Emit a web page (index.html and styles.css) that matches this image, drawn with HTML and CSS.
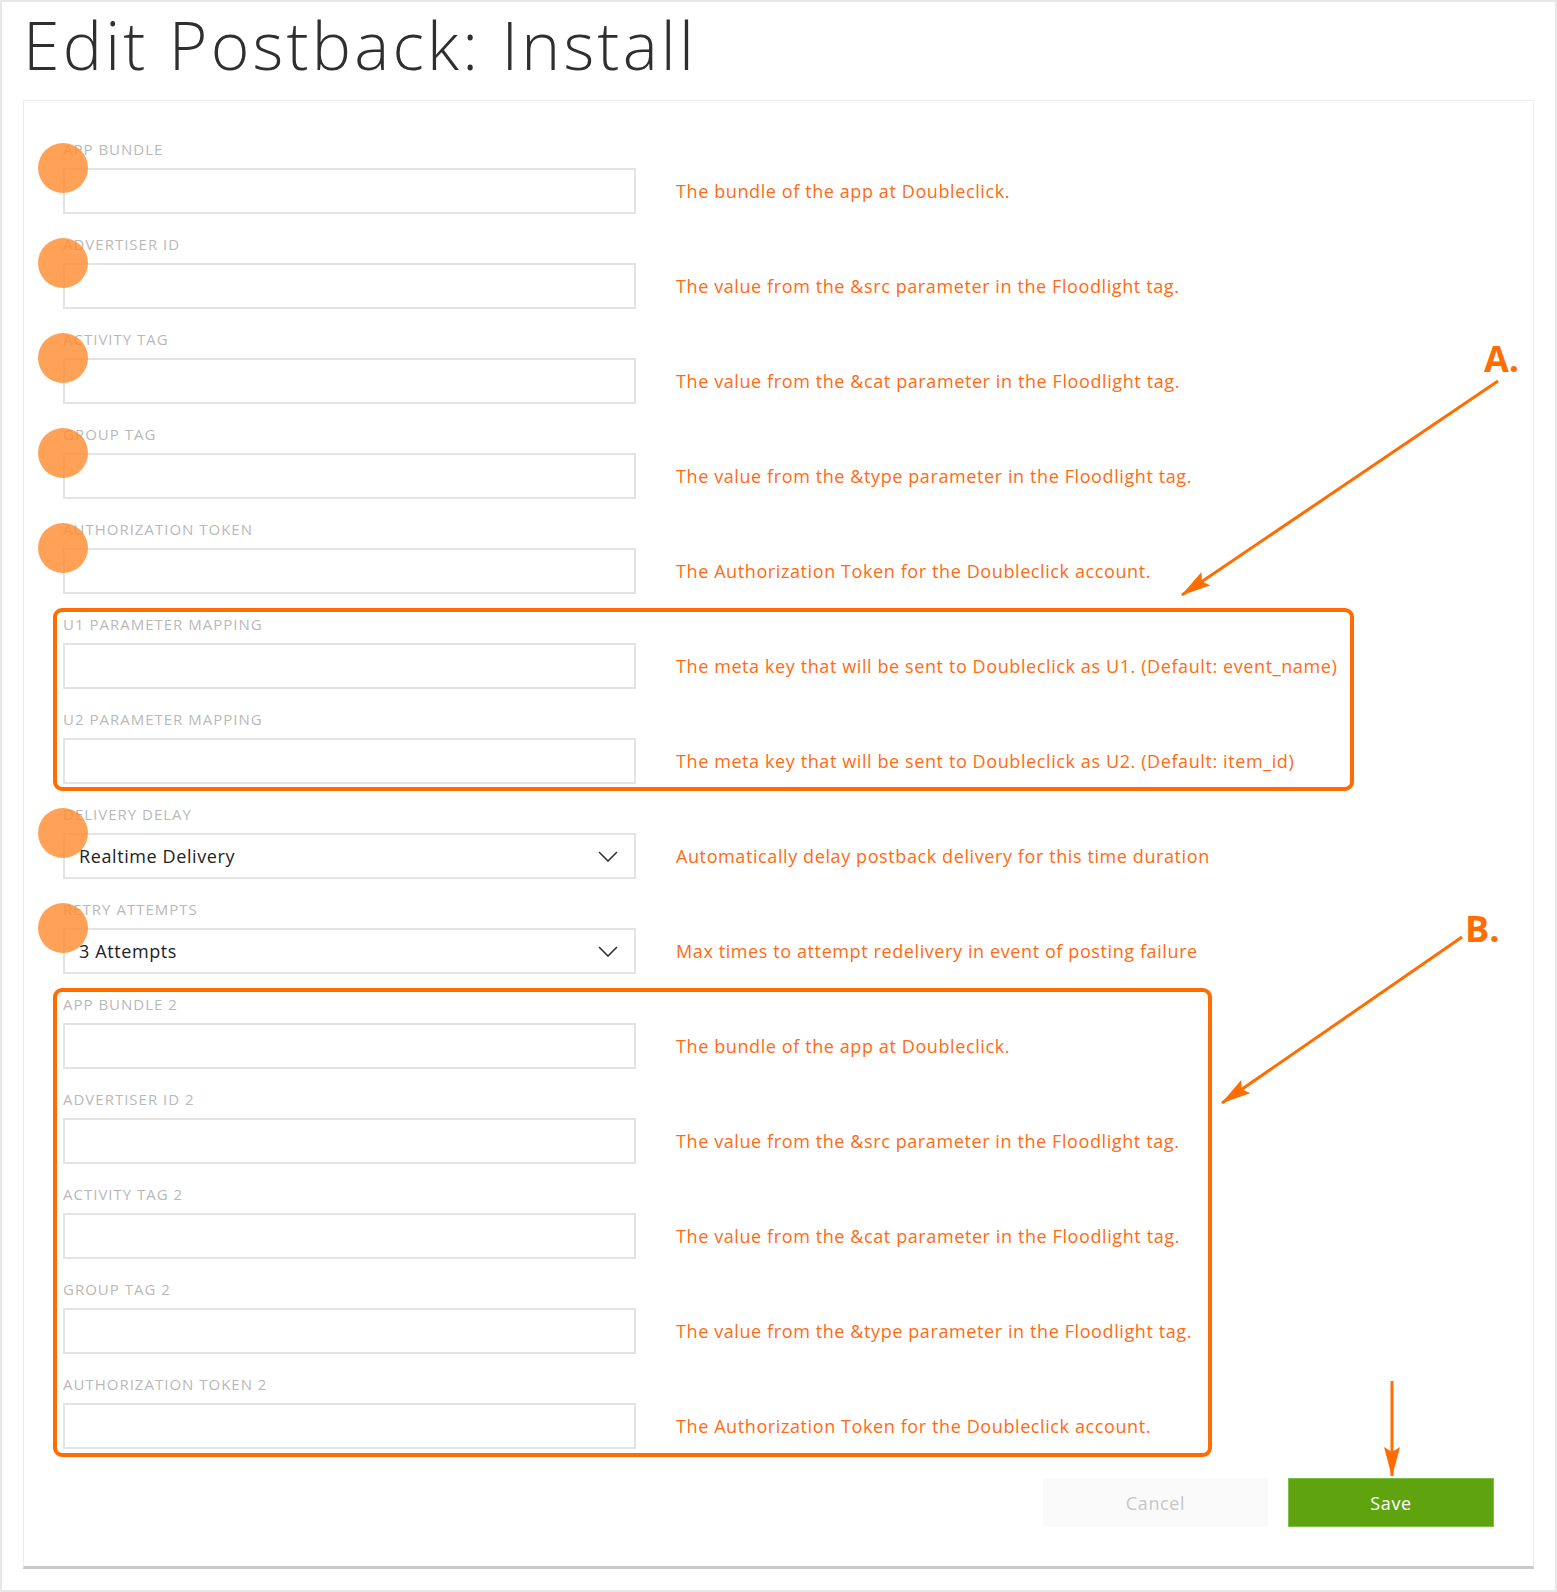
FILE: index.html
```html
<!DOCTYPE html>
<html lang="en">
<head>
    <meta charset="UTF-8">
    <meta name="viewport" content="width=device-width, initial-scale=1.0">
    <title>Edit Postback: Install</title>
    <link rel="stylesheet" href="styles.css">
</head>
<body>
    <div class="page">
        <h1 class="title">Edit Postback: Install</h1>

        <div class="card">
            <div class="fields">
                <div class="field marked">
                    <label>APP BUNDLE</label>
                    <div class="control">
                        <input type="text">
                        <span class="hint">The bundle of the app at Doubleclick.</span>
                    </div>
                </div>
                <div class="field marked">
                    <label>ADVERTISER ID</label>
                    <div class="control">
                        <input type="text">
                        <span class="hint">The value from the &amp;src parameter in the Floodlight tag.</span>
                    </div>
                </div>
                <div class="field marked">
                    <label>ACTIVITY TAG</label>
                    <div class="control">
                        <input type="text">
                        <span class="hint">The value from the &amp;cat parameter in the Floodlight tag.</span>
                    </div>
                </div>
                <div class="field marked">
                    <label>GROUP TAG</label>
                    <div class="control">
                        <input type="text">
                        <span class="hint">The value from the &amp;type parameter in the Floodlight tag.</span>
                    </div>
                </div>
                <div class="field marked">
                    <label>AUTHORIZATION TOKEN</label>
                    <div class="control">
                        <input type="text">
                        <span class="hint">The Authorization Token for the Doubleclick account.</span>
                    </div>
                </div>

                <div class="callout callout-a">
                    <div class="field">
                        <label>U1 PARAMETER MAPPING</label>
                        <div class="control">
                            <input type="text">
                            <span class="hint">The meta key that will be sent to Doubleclick as U1. (Default: event_name)</span>
                        </div>
                    </div>
                    <div class="field">
                        <label>U2 PARAMETER MAPPING</label>
                        <div class="control">
                            <input type="text">
                            <span class="hint">The meta key that will be sent to Doubleclick as U2. (Default: item_id)</span>
                        </div>
                    </div>
                </div>

                <div class="field marked">
                    <label>DELIVERY DELAY</label>
                    <div class="control">
                        <div class="select">
                            <span>Realtime Delivery</span>
                            <svg class="chevron" width="20" height="11" viewBox="0 0 20 11"><polyline points="1,1 10,10 19,1"/></svg>
                        </div>
                        <span class="hint">Automatically delay postback delivery for this time duration</span>
                    </div>
                </div>
                <div class="field marked">
                    <label>RETRY ATTEMPTS</label>
                    <div class="control">
                        <div class="select">
                            <span>3 Attempts</span>
                            <svg class="chevron" width="20" height="11" viewBox="0 0 20 11"><polyline points="1,1 10,10 19,1"/></svg>
                        </div>
                        <span class="hint">Max times to attempt redelivery in event of posting failure</span>
                    </div>
                </div>

                <div class="callout callout-b">
                    <div class="field">
                        <label>APP BUNDLE 2</label>
                        <div class="control">
                            <input type="text">
                            <span class="hint">The bundle of the app at Doubleclick.</span>
                        </div>
                    </div>
                    <div class="field">
                        <label>ADVERTISER ID 2</label>
                        <div class="control">
                            <input type="text">
                            <span class="hint">The value from the &amp;src parameter in the Floodlight tag.</span>
                        </div>
                    </div>
                    <div class="field">
                        <label>ACTIVITY TAG 2</label>
                        <div class="control">
                            <input type="text">
                            <span class="hint">The value from the &amp;cat parameter in the Floodlight tag.</span>
                        </div>
                    </div>
                    <div class="field">
                        <label>GROUP TAG 2</label>
                        <div class="control">
                            <input type="text">
                            <span class="hint">The value from the &amp;type parameter in the Floodlight tag.</span>
                        </div>
                    </div>
                    <div class="field">
                        <label>AUTHORIZATION TOKEN 2</label>
                        <div class="control">
                            <input type="text">
                            <span class="hint">The Authorization Token for the Doubleclick account.</span>
                        </div>
                    </div>
                </div>
            </div>

            <div class="actions">
                <button class="btn btn-cancel">Cancel</button>
                <button class="btn btn-save">Save</button>
            </div>
        </div>
    </div>

    <!-- annotation layer drawn over the form -->
    <span class="note note-a">A.</span>
    <span class="note note-b">B.</span>
    <svg class="arrows" width="1557" height="1592" viewBox="0 0 1557 1592">
        <defs>
            <marker id="head" viewBox="0 0 30 16" refX="29" refY="8" markerWidth="30" markerHeight="16" markerUnits="userSpaceOnUse" orient="auto">
                <path d="M0 0 L30 8 L0 16 L5 8 Z" fill="#ff6d00"/>
            </marker>
        </defs>
        <line x1="1498" y1="381" x2="1182" y2="595" marker-end="url(#head)"/>
        <line x1="1462" y1="937" x2="1222" y2="1103" marker-end="url(#head)"/>
        <line x1="1392" y1="1381" x2="1392" y2="1476" marker-end="url(#head)"/>
    </svg>
</body>
</html>
```

FILE: styles.css
```css
body {
    margin: 0;
    position: relative;
    font-family: "Open Sans", "Liberation Sans", Arial, sans-serif;
    background: #fff;
}

.page {
    box-sizing: border-box;
    height: 1592px;
    border: 2px solid #e8e8e8;
    padding: 0 21px;
}

.title {
    margin: 2px 0 16px;
    font-size: 66px;
    font-weight: 300;
    line-height: 80px;
    letter-spacing: 3.2px;
    color: #2f2f2f;
}

.card {
    border: 1px solid #ececec;
    border-bottom: 3px solid #c9c9c9;
    padding: 39px;
}

.fields,
.callout {
    display: flex;
    flex-direction: column;
    gap: 21px;
}

.field label {
    display: block;
    margin-bottom: 10px;
    font-size: 15px;
    line-height: 18px;
    letter-spacing: 1px;
    color: #b9b9b9;
}

.control {
    position: relative;
    display: flex;
    align-items: center;
}

.control input,
.control .select {
    box-sizing: border-box;
    width: 573px;
    height: 46px;
    border: 2px solid #e3e3e3;
    background: #fff;
    margin: 0;
}

.select {
    display: flex;
    align-items: center;
    justify-content: space-between;
    padding: 0 16px 0 14px;
    font-size: 18px;
    letter-spacing: 0.6px;
    color: #222;
}

.chevron polyline {
    fill: none;
    stroke: #333;
    stroke-width: 1.6;
}

.hint {
    margin-left: 40px;
    font-size: 18px;
    letter-spacing: 0.6px;
    color: #ff6b14;
    white-space: nowrap;
}

/* orange dots on the top left corner of the marked inputs */
.field.marked .control::after {
    content: "";
    position: absolute;
    left: -25px;
    top: -25px;
    width: 50px;
    height: 50px;
    border-radius: 50%;
    background: rgba(255, 140, 50, 0.82);
    z-index: 1;
}

.callout {
    position: relative;
}

.callout::after {
    content: "";
    position: absolute;
    top: -7px;
    bottom: -7px;
    left: -10px;
    box-sizing: border-box;
    border: 4px solid #ff6d00;
    border-radius: 9px;
    pointer-events: none;
}

.callout-a::after {
    width: 1301px;
}

.callout-b::after {
    width: 1159px;
    bottom: -8px;
}

.actions {
    display: flex;
    justify-content: flex-end;
    gap: 20px;
    margin-top: 29px;
}

.btn {
    height: 49px;
    font-family: inherit;
    font-size: 18px;
    letter-spacing: 0.6px;
    border: 1px solid transparent;
    cursor: pointer;
}

.btn-cancel {
    width: 225px;
    background: #fafafa;
    color: #c6c6c6;
}

.btn-save {
    width: 206px;
    background: #5fa40e;
    border-color: #7dc142;
    color: #fff;
}

.note {
    position: absolute;
    font-size: 36px;
    font-weight: 700;
    line-height: 36px;
    color: #ff6d00;
}

.note-a {
    left: 1484px;
    top: 341px;
}

.note-b {
    left: 1465px;
    top: 911px;
}

.arrows {
    position: absolute;
    left: 0;
    top: 0;
    pointer-events: none;
}

.arrows line {
    stroke: #ff6d00;
    stroke-width: 3;
}
```
